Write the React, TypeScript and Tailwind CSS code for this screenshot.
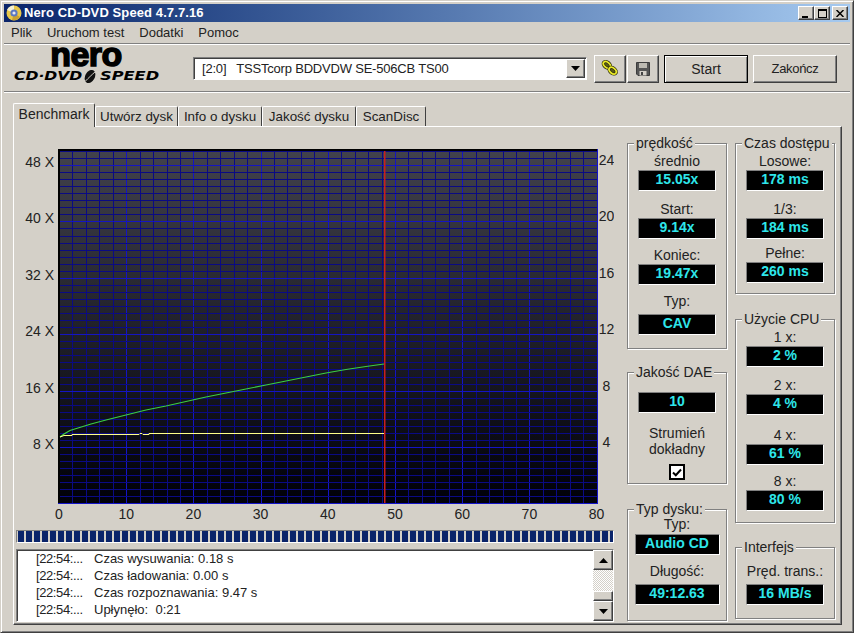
import React from 'react';

const FONT = "[font-family:'Liberation_Sans',Arial,sans-serif]";

const raised = 'border border-t-white border-l-white border-r-[#404040] border-b-[#404040] shadow-[inset_-1px_-1px_0_#808080]';
const sunken = 'border border-t-[#808080] border-l-[#808080] border-r-white border-b-white shadow-[inset_1px_1px_0_#404040]';

const xMinor = Array.from({ length: 41 }, (_, i) => i);
const yMinor = Array.from({ length: 51 }, (_, i) => i);

const X0 = 43;
const Y0 = 376.4;
const px = (v: number) => X0 + v * 6.72;
const py = (v: number) => Y0 - v * 7.05;

const green =
  '44,310 48,307 54,303.5 62,301 75,297 90,293 110,288 130,283 150,279 170,274.5 190,270 210,266 230,262 250,258 270,254 290,250 310,246 330,242.5 350,239.5 368,237';
const yellow = '44,310 48,308.5 56,308.5 56,307.5 123,307.5 124,306.5 126,306.5 127,307.5 133,307.5 133,306.5 368,306.5';

function Chart() {
  return (
    <svg width="598" height="403" viewBox="0 0 598 403" className="block" fontFamily="Liberation Sans" fontSize="14" fill="#222">
      <defs>
        <linearGradient id="plotBg" x1="0" y1="0" x2="0" y2="1">
          <stop offset="0" stopColor="#42424c" />
          <stop offset="1" stopColor="#000008" />
        </linearGradient>
      </defs>
      <rect x="43" y="23" width="538" height="353" fill="url(#plotBg)" />
      {xMinor.map((i) => (
        <line
          key={i}
          x1={px(i * 2) + 0.5}
          x2={px(i * 2) + 0.5}
          y1="23"
          y2="376"
          stroke={i % 5 === 0 ? '#1414c4' : '#0a0a84'}
          strokeWidth="1"
          shapeRendering="crispEdges"
        />
      ))}
      {yMinor.map((i) => (
        <line
          key={i}
          x1="43"
          x2="581"
          y1={Math.round(py(i)) + 0.5}
          y2={Math.round(py(i)) + 0.5}
          stroke={i % 8 === 0 ? '#1414c4' : '#0a0a84'}
          strokeWidth="1"
          shapeRendering="crispEdges"
        />
      ))}
      <rect x="42" y="22" width="2" height="355" fill="#000" />
      <rect x="42" y="22" width="540" height="2" fill="#000" />
      <rect x="42" y="376" width="540" height="1" fill="#1414c8" />
      <rect x="581" y="22" width="1" height="355" fill="#1414c8" />
      <polyline points={green} fill="none" stroke="#3ccf42" strokeWidth="1.2" />
      <polyline points={yellow} fill="none" stroke="#ffff88" strokeWidth="1" />
      <rect x="368" y="24" width="1.5" height="352" fill="#c81e1e" />
      {[48, 40, 32, 24, 16, 8].map((v) => (
        <text key={v} x="38" y={py(v) + 2} textAnchor="end">
          {v} X
        </text>
      ))}
      {[24, 20, 16, 12, 8, 4].map((v) => (
        <text key={v} x="590.5" y={py(v * 2)} textAnchor="middle">
          {v}
        </text>
      ))}
      {[0, 10, 20, 30, 40, 50, 60, 70, 80].map((v) => (
        <text key={v} x={px(v)} y="392" textAnchor="middle">
          {v}
        </text>
      ))}
    </svg>
  );
}

function Group({ title, className, children }: { title: string; className: string; children: React.ReactNode }) {
  return (
    <div className={`relative w-[100px] border border-[#808080] shadow-[1px_1px_0_#fff,inset_1px_1px_0_#fff] flex flex-col items-center ${className}`}>
      <span className="absolute left-[6px] top-[-9px] bg-[#d4d0c8] px-[2px] leading-4 whitespace-nowrap">{title}</span>
      {children}
    </div>
  );
}

function Value({ value, wide }: { value: string; wide?: boolean }) {
  return (
    <div className={`${wide ? 'w-[85px]' : 'w-[78px]'} h-[21px] box-border bg-black border border-t-[#808080] border-l-[#808080] border-r-white border-b-white text-[#2ee6ea] font-bold text-[14px] leading-[17px] text-center`}>
      {value}
    </div>
  );
}

function Stat({ label, value, className, wide, labelH }: { label: string; value: string; className?: string; wide?: boolean; labelH?: string }) {
  return (
    <div className={`flex flex-col items-center ${className ?? ''}`}>
      <div className={`${labelH ?? 'h-4'} leading-[15px] whitespace-nowrap`}>{label}</div>
      <Value value={value} wide={wide} />
    </div>
  );
}

function NeroDisc() {
  return (
    <svg width="16" height="16" viewBox="0 0 16 16" className="shrink-0">
      <circle cx="8" cy="8" r="7.5" fill="#e8c84a" />
      <path d="M8 8 L1 5 A7.5 7.5 0 0 1 8 0.5 Z" fill="#f4f0d0" />
      <path d="M8 8 L14 12 A7.5 7.5 0 0 1 6 15 Z" fill="#c8a030" />
      <circle cx="8" cy="8" r="3.6" fill="#5a78c0" />
      <circle cx="8" cy="8" r="1.6" fill="#e8e8f0" />
    </svg>
  );
}

function LinkIcon() {
  return (
    <svg width="18" height="16" viewBox="0 0 20 18" className="mb-[3px]">
      <ellipse cx="6.5" cy="5.5" rx="4.6" ry="3" transform="rotate(40 6.5 5.5)" fill="#5c5c18" stroke="#2e2e0c" strokeWidth="3.6" />
      <ellipse cx="6.5" cy="5.5" rx="4.6" ry="3" transform="rotate(40 6.5 5.5)" fill="none" stroke="#eaea28" strokeWidth="2" />
      <ellipse cx="13" cy="12" rx="4.6" ry="3" transform="rotate(40 13 12)" fill="#5c5c18" stroke="#2e2e0c" strokeWidth="3.6" />
      <ellipse cx="13" cy="12" rx="4.6" ry="3" transform="rotate(40 13 12)" fill="none" stroke="#eaea28" strokeWidth="2" />
    </svg>
  );
}

function SaveIcon() {
  return (
    <svg width="14" height="14" viewBox="0 0 14 14">
      <path d="M0.5 0.5 H13.5 V13.5 H2 L0.5 12 Z" fill="#555" stroke="#3c3c3c" />
      <rect x="3" y="1" width="8" height="5" fill="#bdbab2" />
      <rect x="3.5" y="9" width="7" height="4.5" fill="#d4d0c8" />
      <rect x="5" y="10" width="2" height="3" fill="#444" />
    </svg>
  );
}

function LogoSwoosh() {
  return (
    <svg width="17" height="13" viewBox="0 0 17 13" className="shrink-0">
      <ellipse cx="8" cy="6.5" rx="4.8" ry="7" transform="rotate(28 8 6.5)" fill="#111" />
      <path d="M3.5 11 C6.5 8 9.5 5 13.5 1.5" stroke="#d4d0c8" strokeWidth="1" fill="none" />
    </svg>
  );
}

function Arrow({ down }: { down?: boolean }) {
  return (
    <svg width="9" height="5" viewBox="0 0 9 5">
      <path d={down ? 'M0 0 H9 L4.5 5 Z' : 'M0 5 H9 L4.5 0 Z'} fill="#000" />
    </svg>
  );
}

const tabs = [
  { name: 'Utwórz dysk', w: 'w-[83px]' },
  { name: 'Info o dysku', w: 'w-[84px]' },
  { name: 'Jakość dysku', w: 'w-[94px]' },
  { name: 'ScanDisc', w: 'w-[70px]' },
];

const log = [
  ['[22:54:...', 'Czas wysuwania: 0.18 s'],
  ['[22:54:...', 'Czas ładowania: 0.00 s'],
  ['[22:54:...', 'Czas rozpoznawania: 9.47 s'],
  ['[22:54:...', 'Upłynęło:  0:21'],
];

export default function App() {
  return (
    <div className={`${FONT} w-[854px] h-[633px] box-border overflow-hidden bg-[#d4d0c8] text-[14px] text-[#222] border border-t-[#d4d0c8] border-l-[#d4d0c8] border-r-[#404040] border-b-[#404040] shadow-[inset_1px_1px_0_#fff,inset_-1px_-1px_0_#808080] pt-[3px] px-[3px]`}>
      {/* title bar */}
      <div className="h-[18px] flex items-center bg-gradient-to-r from-[#0a246a] to-[#a6caf0] pl-[2px] pr-[2px]">
        <NeroDisc />
        <span className="ml-[2px] text-white font-bold text-[13px] tracking-[0.1px] leading-[18px]">Nero CD-DVD Speed 4.7.7.16</span>
        <div className="ml-auto flex items-center">
          {['min', 'max'].map((b) => (
            <div key={b} className={`w-[16px] h-[14px] box-border bg-[#d4d0c8] flex items-center justify-center ${raised}`}>
              {b === 'min' ? (
                <div className="w-[6px] h-[2px] bg-black mt-[7px] mr-[3px]" />
              ) : (
                <div className="w-[9px] h-[9px] border border-black border-t-2" />
              )}
            </div>
          ))}
          <div className={`ml-[2px] w-[16px] h-[14px] box-border bg-[#d4d0c8] flex items-center justify-center ${raised}`}>
            <svg width="8" height="7" viewBox="0 0 8 7">
              <path d="M0.5 0 L7.5 7 M7.5 0 L0.5 7" stroke="#000" strokeWidth="1.5" />
            </svg>
          </div>
        </div>
      </div>

      {/* menu */}
      <div className="h-[21px] flex items-center gap-[15px] pl-[7px] text-[13px] border-b border-[#808080] shadow-[0_1px_0_#fff] box-content">
        <span>Plik</span>
        <span>Uruchom test</span>
        <span>Dodatki</span>
        <span>Pomoc</span>
      </div>

      {/* toolbar */}
      <div className="h-[47px] flex items-start border-b border-[#808080] shadow-[0_1px_0_#fff] box-content">
        <div className="w-[189px] h-[47px] shrink-0 pl-[10px]">
          <div className="w-[144px] text-center font-bold text-black text-[34px] leading-[24px] mt-[-2px] tracking-[-0.5px] [-webkit-text-stroke:1.5px_black]">nero</div>
          <div className="flex items-center text-black mt-[4px] h-[13px] [font-family:'DejaVu_Sans',sans-serif] font-bold italic text-[12px] leading-[13px] whitespace-nowrap">
            <span className="inline-block w-[68px] scale-x-[1.3] origin-left">CD·DVD</span>
            <LogoSwoosh />
            <span className="inline-block ml-[1px] scale-x-[1.35] origin-left">SPEED</span>
          </div>
        </div>
        <div className={`mt-[13px] w-[394px] h-[23px] box-border bg-white flex items-center ${sunken}`}>
          <span className="pl-[8px] text-[13px] tracking-[-0.2px] whitespace-pre">[2:0]   TSSTcorp BDDVDW SE-506CB TS00</span>
          <div className={`ml-auto w-[19px] h-[19px] box-border mr-[1px] bg-[#d4d0c8] flex items-center justify-center ${raised}`}>
            <Arrow down />
          </div>
        </div>
        <button className={`ml-[7px] mt-[11px] w-[32px] h-[28px] box-border bg-[#d4d0c8] flex items-center justify-center ${raised}`}>
          <LinkIcon />
        </button>
        <button className={`ml-[1px] mt-[11px] w-[32px] h-[28px] box-border bg-[#d4d0c8] flex items-center justify-center ${raised}`}>
          <SaveIcon />
        </button>
        <button className="ml-[5px] mt-[11px] w-[84px] h-[28px] box-border bg-[#d4d0c8] border border-black shadow-[inset_1px_1px_0_#fff,inset_-1px_-1px_0_#808080]">Start</button>
        <button className={`ml-[5px] mt-[11px] w-[84px] h-[28px] box-border bg-[#d4d0c8] text-[13px] tracking-[-0.3px] ${raised}`}>Zakończ</button>
      </div>

      {/* tabs */}
      <div className="h-[33px] mt-[1px] ml-[9px] flex items-end relative z-10">
        <div className="w-[82px] h-[24px] box-border bg-[#d4d0c8] border-l border-t border-l-white border-t-white border-r border-r-[#404040] rounded-t-[2px] text-center leading-[20px] mb-[-1px]">Benchmark</div>
        {tabs.map((t) => (
          <div key={t.name} className={`${t.w} h-[20px] box-border bg-[#d4d0c8] border-l border-t border-l-white border-t-white border-r border-r-[#404040] rounded-t-[2px] text-center text-[13.4px] leading-[19px]`}>
            {t.name}
          </div>
        ))}
      </div>

      {/* tab panel */}
      <div className="ml-[9px] w-[829px] h-[499px] box-border flex border border-t-white border-l-white border-r-[#404040] border-b-[#404040] shadow-[inset_-1px_-1px_0_#808080]">
        <div className="w-[598px] ml-[2px] shrink-0 flex flex-col">
          <Chart />
          <div className="h-[13px] box-border border border-t-[#808080] border-l-[#808080] border-r-white border-b-white flex gap-[2px] pl-[1px] overflow-hidden">
            {Array.from({ length: 75 }, (_, i) => (
              <div key={i} className="w-[6px] h-full shrink-0 bg-[#0a246a]" />
            ))}
          </div>
          <div className={`mt-[6px] h-[73px] box-border bg-white flex ${sunken}`}>
            <div className="flex-1 pl-[19px] text-[13px]">
              {log.map(([time, msg], i) => (
                <div key={i} className="h-[17px] leading-[17px] flex">
                  <span className="w-[58px] tracking-[-0.4px]">{time}</span>
                  <span className="whitespace-pre">{msg}</span>
                </div>
              ))}
            </div>
            <div className="w-[20px] flex flex-col bg-[repeating-conic-gradient(#d4d0c8_0_25%,#fff_0_50%)] bg-[length:2px_2px]">
              <div className={`h-[20px] box-border bg-[#d4d0c8] flex items-center justify-center ${raised}`}>
                <Arrow />
              </div>
              <div className="flex-1" />
              <div className={`h-[10px] box-border bg-[#d4d0c8] ${raised}`} />
              <div className={`h-[20px] box-border bg-[#d4d0c8] flex items-center justify-center ${raised}`}>
                <Arrow down />
              </div>
            </div>
          </div>
        </div>

        <div className="ml-[13px] flex gap-[8px]">
          <div className="flex flex-col">
            <Group title="prędkość" className="mt-[16px] h-[206px] pt-[10px]">
              <Stat label="średnio" value="15.05x" />
              <Stat label="Start:" value="9.14x" className="mt-[11px]" />
              <Stat label="Koniec:" value="19.47x" className="mt-[9px]" />
              <Stat label="Typ:" value="CAV" labelH="h-5" className="mt-[9px]" />
            </Group>
            <Group title="Jakość DAE" className="mt-[23px] h-[112px] pt-[19px]">
              <Value value="10" />
              <div className="mt-[12px] text-center leading-[16px]">
                Strumień
                <br />
                dokładny
              </div>
              <div className="mt-[7px] w-[16px] h-[16px] box-border bg-white border-2 border-black flex items-center justify-center">
                <svg width="10" height="9" viewBox="0 0 10 9">
                  <path d="M1 4.5 L3.8 7.2 L9 1.5" fill="none" stroke="#000" strokeWidth="2" />
                </svg>
              </div>
            </Group>
            <Group title="Typ dysku:" className="mt-[25px] h-[112px] pt-[7px]">
              <Stat label="Typ:" value="Audio CD" wide labelH="h-[17px]" />
              <Stat label="Długość:" value="49:12.63" wide labelH="h-5" className="mt-[9px]" />
            </Group>
          </div>
          <div className="flex flex-col">
            <Group title="Czas dostępu" className="mt-[16px] h-[151px] pt-[10px]">
              <Stat label="Losowe:" value="178 ms" />
              <Stat label="1/3:" value="184 ms" className="mt-[11px]" />
              <Stat label="Pełne:" value="260 ms" className="mt-[7px]" />
            </Group>
            <Group title="Użycie CPU" className="mt-[25px] h-[204px] pt-[10px]">
              <Stat label="1 x:" value="2 %" />
              <Stat label="2 x:" value="4 %" className="mt-[11px]" />
              <Stat label="4 x:" value="61 %" className="mt-[13px]" />
              <Stat label="8 x:" value="80 %" className="mt-[9px]" />
            </Group>
            <Group title="Interfejs" className="mt-[24px] h-[72px] pt-[16px]">
              <Stat label="Pręd. trans.:" value="16 MB/s" labelH="h-5" />
            </Group>
          </div>
        </div>
      </div>
    </div>
  );
}
